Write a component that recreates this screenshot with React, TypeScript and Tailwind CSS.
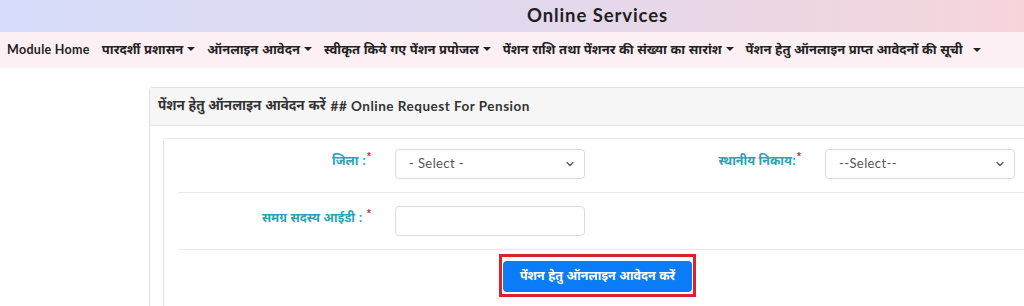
import React from "react";
import { ChevronDown } from "lucide-react";

const Caret = () => (
  <span className="inline-block ml-[4px] w-0 h-0 border-l-[4px] border-r-[4px] border-t-[4px] border-l-transparent border-r-transparent border-t-[#222] align-middle relative top-[-1px]" />
);

const navItems: { label: string; caret: boolean; extraGap?: boolean }[] = [
  { label: "Module Home", caret: false },
  { label: "पारदर्शी प्रशासन", caret: true },
  { label: "ऑनलाइन आवेदन", caret: true },
  { label: "स्वीकृत किये गए पेंशन प्रपोजल", caret: true },
  { label: "पेंशन राशि तथा पेंशनर की संख्या का सारांश", caret: true },
  { label: "पेंशन हेतु ऑनलाइन प्राप्त आवेदनों की सूची", caret: true, extraGap: true },
];

const Select = ({ text }: { text: string }) => (
  <div className="w-[190px] h-[30px] border border-[#dcdcdc] rounded-[4px] bg-white flex items-center justify-between pl-[13px] pr-[8px] text-[13px] text-[#555] font-['Lato',sans-serif] tracking-[0.4px]">
    <span>{text}</span>
    <ChevronDown size={12} strokeWidth={2.5} className="text-[#555]" />
  </div>
);

const Label = ({ text, w }: { text: string; w: string }) => (
  <div className={`${w} text-right pt-[3px] text-[12.5px] font-bold text-[#2aa3b5]`}>
    {text}
    <sup className="text-[#d9302c] text-[10px] ml-[1px]">*</sup>
  </div>
);

export default function App() {
  return (
    <div className="w-[1024px] h-[306px] overflow-hidden bg-white font-['Liberation_Sans','Noto_Sans',sans-serif]">
      <div className="h-[32px] bg-gradient-to-r from-[#d5dcf9] via-[#e1d8ee] to-[#f6d5da] flex items-center">
        <div className="ml-[527px] text-[18.5px] font-bold text-[#1e1e1e] font-['Lato',sans-serif] tracking-[0.9px]">
          Online Services
        </div>
      </div>
      <div className="h-[36px] bg-[#fdf0f4] flex items-center pl-[7px] gap-[12px] text-[13px] font-bold text-[#222] whitespace-nowrap">
        {navItems.map((n) => (
          <span key={n.label} className="flex items-center">
            <span className={n.label === "Module Home" ? "font-['Lato',sans-serif] tracking-[0.3px] text-[12.5px]" : ""}>{n.label}</span>
            {n.caret && (n.extraGap ? <span className="ml-[6px]"><Caret /></span> : <Caret />)}
          </span>
        ))}
      </div>
      <div className="ml-[149px] mt-[19px] w-[900px] border border-[#e0e0e0] rounded-[3px]">
        <div className="h-[38px] bg-[#f6f6f6] border-b border-[#e3e3e3] flex items-center pl-[8px] text-[13px] font-bold text-[#333]">
          <span className="text-[13.5px]">पेंशन हेतु ऑनलाइन आवेदन करें</span>
          <span className="ml-[5px] font-['Lato',sans-serif] tracking-[0.5px] text-[13.5px]">## Online Request For Pension</span>
        </div>
        <div className="pl-[13px] pt-[12px]">
          <div className="border border-[#e6e6e6] rounded-[3px] h-[171px]">
            <div className="flex items-start pt-[10px]">
              <Label text="जिला :" w="w-[207px]" />
              <div className="ml-[24px]">
                <Select text="- Select -" />
              </div>
              <Label text="स्थानीय निकाय:" w="w-[216px]" />
              <div className="ml-[24px]">
                <Select text="--Select--" />
              </div>
            </div>
            <div className="ml-[14px] mr-[20px] mt-[13px] border-t border-[#e8e8e8]" />
            <div className="flex items-start pt-[13px]">
              <Label text="समग्र सदस्य आईडी : " w="w-[207px]" />
              <div className="ml-[24px] w-[190px] h-[30px] border border-[#dcdcdc] rounded-[4px] bg-white" />
            </div>
            <div className="ml-[14px] mr-[20px] mt-[13px] border-t border-[#e8e8e8]" />
            <div className="flex pl-[335px] pt-[4px]">
              <div className="border-[3px] border-[#d8232f] pl-[1px] pr-[1px] pt-[4px] pb-[2px]">
                <button className="w-[189px] h-[31px] bg-[#0a7cf8] rounded-[4px] text-white text-[12.5px] font-bold">
                  पेंशन हेतु ऑनलाइन आवेदन करें
                </button>
              </div>
            </div>
          </div>
        </div>
      </div>
    </div>
  );
}
